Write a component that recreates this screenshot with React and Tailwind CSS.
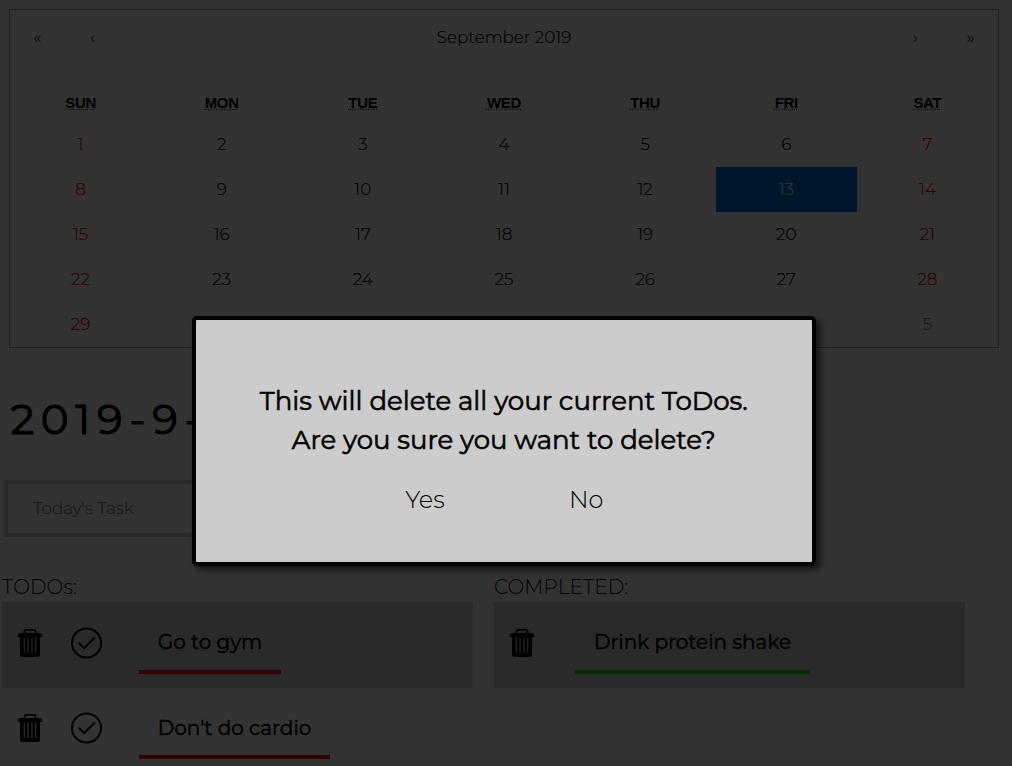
const weekdays = ["SUN", "MON", "TUE", "WED", "THU", "FRI", "SAT"];
const days = [...Array.from({ length: 30 }, (_, i) => i + 1), 1, 2, 3, 4, 5];

function TrashIcon() {
  return (
    <svg className="block h-[28px] w-[24px] shrink-0" viewBox="0 0 24 28" aria-label="Delete">
      <path d="M6.500 4.500V2.200a1.300 1.300 0 0 1 1.300-1.300h8.400a1.300 1.300 0 0 1 1.300 1.300v2.300" fill="none" stroke="#000" strokeWidth="1.800" />
      <path d="M2 4h20a2 2 0 0 1 2 2v2H0V6a2 2 0 0 1 2-2Z" />
      <path fillRule="evenodd" d="M2 8h20v18a2 2 0 0 1-2 2H4a2 2 0 0 1-2-2ZM5.700 8.500v15.500h1.100V8.500ZM9.500 8.500v15.500h1.100V8.500ZM13.400 8.500v15.500h1.100V8.500ZM17.200 8.500v15.500h1.100V8.500Z" />
    </svg>
  );
}

function CheckIcon() {
  return (
    <svg className="block h-8 w-[31px] shrink-0" viewBox="0 0 31 32" fill="none" stroke="#000" aria-label="Complete">
      <circle cx="15.500" cy="16" r="14.600" strokeWidth="2" />
      <path d="m8.300 16.300 4.800 4.800L23.200 11" strokeWidth="2" strokeLinecap="round" strokeLinejoin="round" />
    </svg>
  );
}

function Task({ children, shaded, done, width }) {
  return (
    <li className={`flex h-[85.400px] items-start pl-4 ${shaded ? "bg-[#d3d3d3]" : ""}`}>
      <div className="mt-[26.700px]"><TrashIcon /></div>
      {!done && <div className="mt-[24.700px] ml-[29px]"><CheckIcon /></div>}
      <div
        className={`mt-[25.700px] flex h-[46px] justify-center border-b-4 pt-[0.400px] text-[20px] leading-[28px] font-normal whitespace-nowrap [-webkit-text-stroke:0.5px_black] ${done ? "ml-[41px] border-[#2bd400]" : "ml-[37px] border-[#ff0000]"} ${width}`}
      >
        {children}
      </div>
    </li>
  );
}

export default function App() {
  return (
    <div className="relative h-[766px] w-[1012px] overflow-hidden bg-white font-['Montserrat','Inter',sans-serif] text-black">
      <section className="mt-[9px] ml-[9px] h-[339px] w-[990px] border border-[#a0a096] text-[16.800px] font-light">
        <header className="flex h-[71px] items-start leading-[55px]">
          <button className="w-[55px] font-normal text-[#333]">«</button>
          <button className="w-[55px] font-normal text-[#333]">‹</button>
          <div className="flex-1 text-center [-webkit-text-stroke:0.2px_currentColor]">September 2019</div>
          <button className="w-[55px] font-normal text-[#333]">›</button>
          <button className="w-[55px] font-normal text-[#333]">»</button>
        </header>
        <div className="grid h-[41px] grid-cols-7 text-center font-['Liberation_Sans',sans-serif] text-[15px] leading-[43px] font-bold tracking-[-0.300px]">
          {weekdays.map((d) => (
            <div key={d}><abbr className="underline decoration-dotted decoration-1 underline-offset-1">{d}</abbr></div>
          ))}
        </div>
        <div className="grid auto-rows-[45px] grid-cols-7 text-center leading-[45px] [-webkit-text-stroke:0.2px_currentColor]">
          {days.map((d, i) => (
            <div
              key={i}
              className={i >= 30 ? "text-[#757575] [-webkit-text-stroke-color:#757575]" : i === 12 ? "bg-[#006edc] text-white [-webkit-text-stroke-color:white]" : i % 7 === 0 || i % 7 === 6 ? "text-[#d10000] [-webkit-text-stroke-color:#d10000]" : ""}
            >
              {d}
            </div>
          ))}
        </div>
      </section>

      <h1 className="mt-[41px] ml-[10.500px] h-[61px] text-[42px] leading-[60px] font-normal tracking-[6.600px] whitespace-nowrap [-webkit-text-stroke:1px_black]">2019-9-13</h1>

      <input
        className="mt-[30px] ml-1 block h-[57px] w-[480px] border-4 border-[#d3d3d3] pb-[2px] pl-[25px] text-[16.800px] font-light placeholder:text-[#757575] placeholder:[-webkit-text-stroke:0.2px_#757575]"
        placeholder="Today's Task"
      />

      <main className="mt-[36px] ml-[2px] flex gap-[21px]">
        <section className="w-[471px]">
          <h2 className="h-[29.300px] text-[20px] leading-[28px] font-light tracking-[0.080px]">TODOs:</h2>
          <ul>
            <Task shaded width="w-[142px]">Go to gym</Task>
            <Task width="w-[191px]">Don't do cardio</Task>
          </ul>
        </section>
        <section className="w-[471px]">
          <h2 className="h-[29.300px] text-[20px] leading-[28px] font-light tracking-[0.080px]">COMPLETED:</h2>
          <ul>
            <Task shaded done width="w-[235px]">Drink protein shake</Task>
          </ul>
        </section>
      </main>

      <div className="absolute inset-0 bg-black/80">
        <div role="dialog" className="mt-[316px] ml-[191.500px] h-[250px] w-[624.500px] rounded-[5px] border-4 border-black bg-[#ccc] pt-[62px] text-center shadow-[4px_4px_6px_rgba(0,0,0,0.6)]">
          <p className="text-[26px] leading-[39px] font-normal [-webkit-text-stroke:0.6px_black]">
            This will delete all your current ToDos.<br />Are you sure you want to delete?
          </p>
          <div className="mt-[22px] flex text-[24px] leading-9 font-light">
            <button className="ml-[209.500px] w-[40px]">Yes</button>
            <button className="ml-[124px] w-[33px]">No</button>
          </div>
        </div>
      </div>
    </div>
  );
}
